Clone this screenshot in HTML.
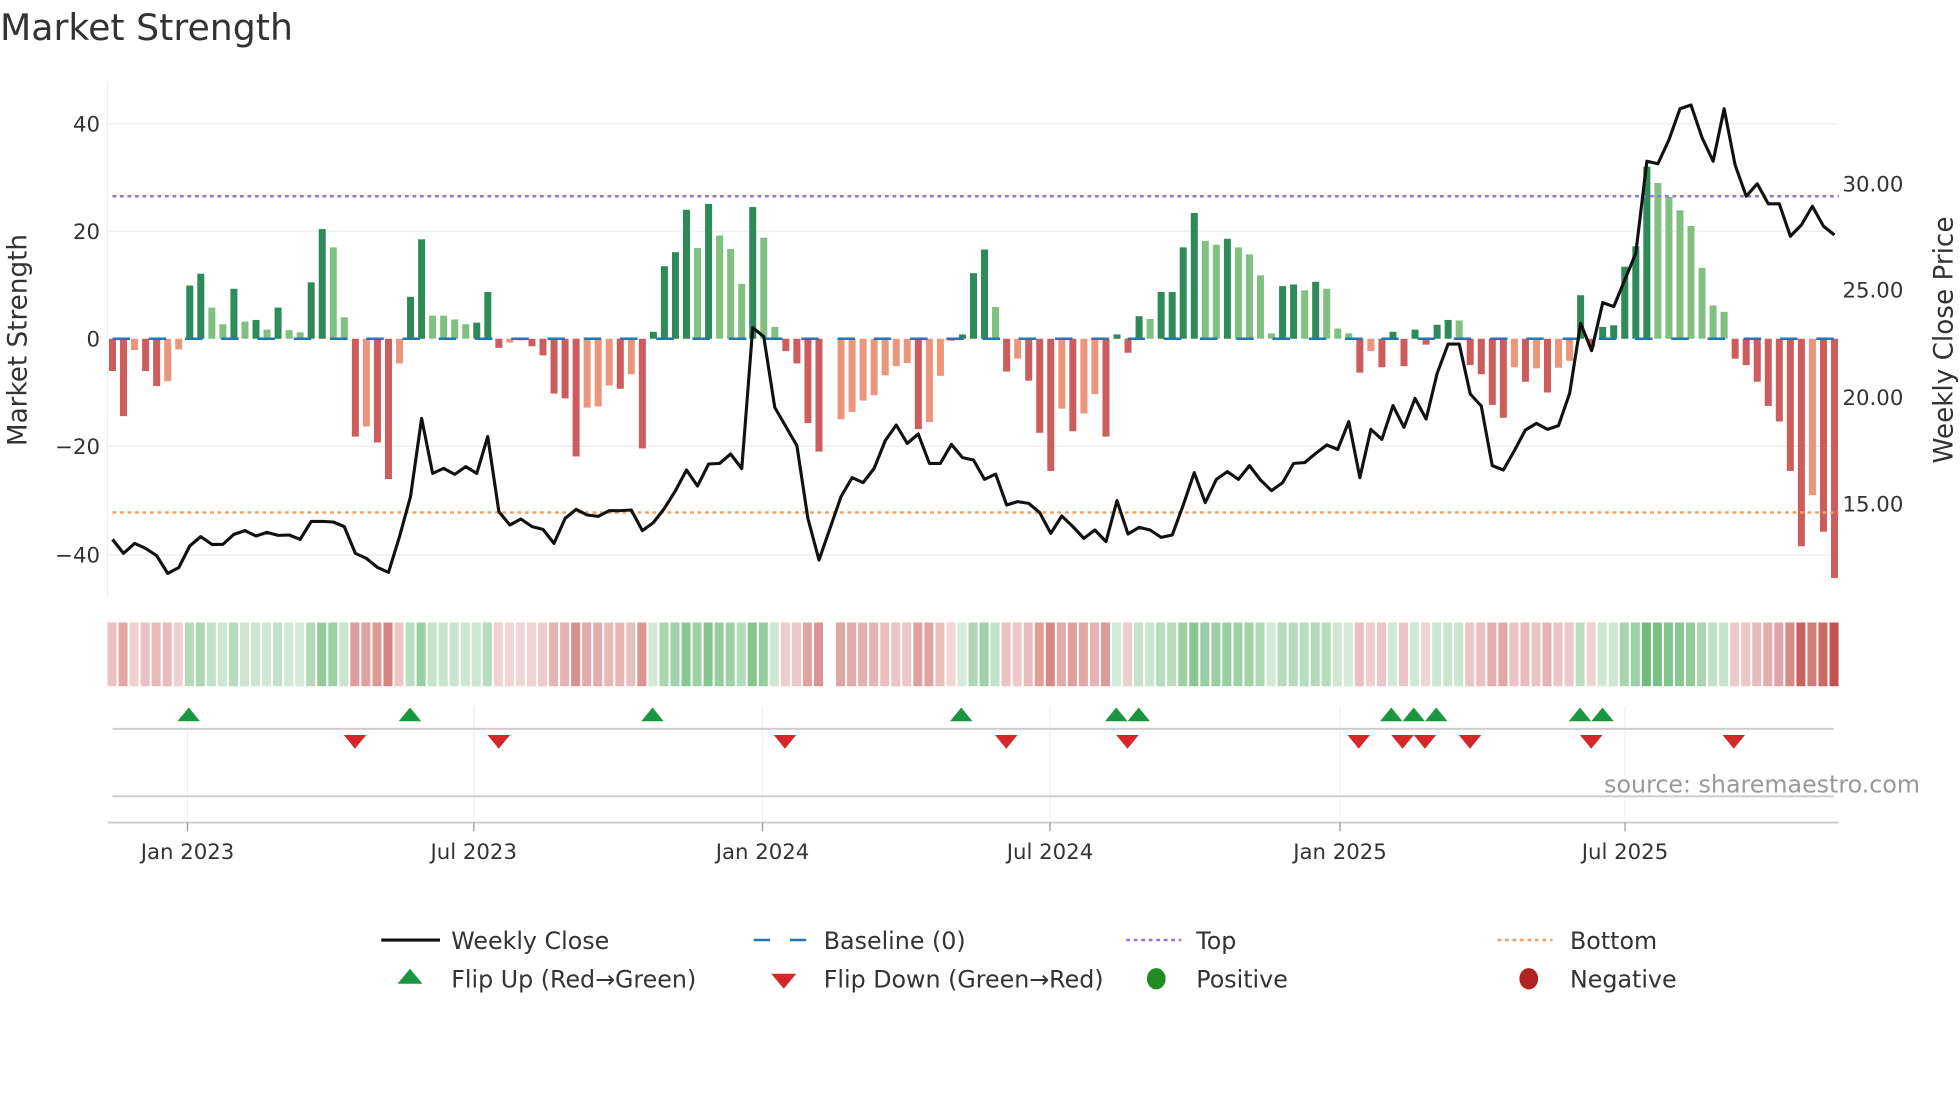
<!DOCTYPE html>
<html><head><meta charset="utf-8">
<style>
html,body{margin:0;padding:0;background:#fff;overflow:hidden}
svg{display:block}
text{font-family:"DejaVu Sans","Liberation Sans",sans-serif;fill:#333}
</style></head>
<body>
<svg id="s" xmlns="http://www.w3.org/2000/svg" width="1960" height="1102" viewBox="0 0 1568 881.6">
<rect width="1568" height="882" fill="#fff"/>
<text x="0" y="32" font-size="29" fill="#333">Market Strength</text>
<g stroke="#efefef" stroke-width="1.2">
<line x1="86" y1="99" x2="1471" y2="99"/><line x1="86" y1="185" x2="1471" y2="185"/>
<line x1="86" y1="357" x2="1471" y2="357"/><line x1="86" y1="444" x2="1471" y2="444"/>
</g>
<line x1="86" y1="65" x2="86" y2="478" stroke="#eee" stroke-width="1"/>
<g font-size="17" text-anchor="end">
<text x="80" y="105">40</text><text x="80" y="191">20</text><text x="80" y="277">0</text>
<text x="80" y="363">−20</text><text x="80" y="450">−40</text>
</g>
<g font-size="17">
<text x="1474" y="153">30.00</text><text x="1474" y="238">25.00</text>
<text x="1474" y="324">20.00</text><text x="1474" y="409">15.00</text>
</g>
<text transform="translate(21,272) rotate(-90)" font-size="21" text-anchor="middle">Market Strength</text>
<text transform="translate(1562,272) rotate(-90)" font-size="21" text-anchor="middle">Weekly Close Price</text>
<g id="bars"></g>
<line x1="90" y1="271" x2="1467" y2="271" stroke="#1f77b4" stroke-width="2" stroke-dasharray="14 15"/>
<line x1="90" y1="157" x2="1471" y2="157" stroke="#9b6fdc" stroke-width="2" stroke-dasharray="3 3"/>
<line x1="90" y1="410" x2="1471" y2="410" stroke="#f0a060" stroke-width="2" stroke-dasharray="3 3"/>
<polyline id="price" fill="none" stroke="#111" stroke-width="2.5" stroke-linejoin="round"/>
<g id="heat"></g>
<g stroke="#eef0f3" stroke-width="1">
<line x1="150" y1="565" x2="150" y2="656"/><line x1="379" y1="565" x2="379" y2="656"/>
<line x1="610" y1="565" x2="610" y2="656"/><line x1="840" y1="565" x2="840" y2="656"/>
<line x1="1072" y1="565" x2="1072" y2="656"/><line x1="1300" y1="565" x2="1300" y2="656"/>
</g>
<line x1="90" y1="583" x2="1467" y2="583" stroke="#ccc" stroke-width="1.5"/>
<line x1="90" y1="637" x2="1467" y2="637" stroke="#ccc" stroke-width="1.5"/>
<line x1="86" y1="658" x2="1471" y2="658" stroke="#ccc" stroke-width="1.5"/>
<g id="flips"></g>
<g stroke="#999" stroke-width="1">
<line x1="150" y1="658" x2="150" y2="665"/><line x1="379" y1="658" x2="379" y2="665"/>
<line x1="610" y1="658" x2="610" y2="665"/><line x1="840" y1="658" x2="840" y2="665"/>
<line x1="1072" y1="658" x2="1072" y2="665"/><line x1="1300" y1="658" x2="1300" y2="665"/>
</g>
<g font-size="17" text-anchor="middle">
<text x="150" y="687">Jan 2023</text><text x="379" y="687">Jul 2023</text>
<text x="610" y="687">Jan 2024</text><text x="840" y="687">Jul 2024</text>
<text x="1072" y="687">Jan 2025</text><text x="1300" y="687">Jul 2025</text>
</g>
<text x="1536" y="634" font-size="19" text-anchor="end" style="fill:#999">source: sharemaestro.com</text>
<g font-size="19">
<line x1="305" y1="752" x2="352" y2="752" stroke="#111" stroke-width="2.5"/>
<text x="361" y="759">Weekly Close</text>
<line x1="603" y1="752" x2="646" y2="752" stroke="#1f77b4" stroke-width="2" stroke-dasharray="13 16"/>
<text x="659" y="759">Baseline (0)</text>
<line x1="901" y1="752" x2="945" y2="752" stroke="#9b6fdc" stroke-width="2" stroke-dasharray="3 3"/>
<text x="957" y="759">Top</text>
<line x1="1198" y1="752" x2="1242" y2="752" stroke="#f0a060" stroke-width="2" stroke-dasharray="3 3"/>
<text x="1256" y="759">Bottom</text>
<polygon points="328,775 338,787 318,787" fill="#1a9641"/>
<text x="361" y="790">Flip Up (Red→Green)</text>
<polygon points="617,779 637,779 627,791" fill="#d62728"/>
<text x="659" y="790">Flip Down (Green→Red)</text>
<ellipse cx="925" cy="783" rx="7.5" ry="8.5" fill="#228b22"/>
<text x="957" y="790">Positive</text>
<ellipse cx="1223" cy="783" rx="7.5" ry="8.5" fill="#b22222"/>
<text x="1256" y="790">Negative</text>
</g>
</svg>
<script>
var D="-6r -14.4r -2.1l -6r -8.8r -7.9l -2l 9.9d 12.1d 5.8l 2.7l 9.3d 3.2l 3.5d 1.7l 5.8d 1.6l 1.2l 10.5d 20.4d 17l 4l -18.2r -16.3l -19.3r -26.1r -4.6l 7.8d 18.5d 4.3l 4.3l 3.6l 2.7l 3d 8.7d -1.7r -0.7l -0.3l -1.4r -3.1r -10.2r -11.1r -21.9r -12.8l -12.6l -8.7l -9.3r -6.6l -20.4r 1.3d "+
"13.5d 16.1d 24d 16.9l 25.1d 19.2l 16.7l 10.2l 24.5d 18.8l 2.2l -2.3r -4.6r -15.7r -21r x -15l -13.6l -11.5l -10.5l -6.8l -5.1l -4.5l -16.8r -15.5l -6.9l -0.4l 0.8d 12.2d 16.6d 5.9l -6.1r -3.7l -7.8r -17.5r -24.6r -13l -17.2r -13.9l -10.3l -18.2r 0.8d -2.6r 4.2d 3.7l 8.7d 8.7d 17d 23.4d "+
"18.2l 17.5l 18.6d 17l 15.7l 11.8l 1l 9.8d 10.1d 9l 10.6d 9.3l 1.9l 1l -6.3r -2.3l -5.3r 1.3d -5.1r 1.7d -1.1r 2.6d 3.5d 3.4l -4.9r -6.6r -12.3r -14.7r -5.3l -8r -5.5l -10r -5.4l -4.1l 8.1d -1.5r 2.2d 2.5d 13.4d 17.2d 32d 29l 26.4l 23.9l 21l 13.2l 6.2l 5l -3.7r -4.9r -8r -12.5r -15.4r -24.6r -38.6r -29.1l -35.9r -44.5r";
var T=D.split(' ');
var Z2=[1078,1120,1090,1105,1127,1180,1163,1098,1070,1093,1093,1063,1052,1068,1057,1066,1065,1078,1024,1024,1026,1040,1120,1135,1162,1177,1070,950,715,880,865,883,860,880,770,995,1035,1017,1040,1048,1090,1015,988,1005,1009,992,992,990,1052,1028,
985,932,870,918,852,850,822,866,443,470,682,740,797,1015,1140,1045,950,893,908,865,782,735,790,762,850,850,793,833,840,898,882,975,965,970,998,1060,1008,1040,1075,1050,1085,962,1062,1042,1050,1072,1065,975,878,
968,898,875,898,857,900,932,908,850,848,820,795,808,725,893,748,778,677,742,655,717,580,492,492,642,678,857,870,812,750,730,748,737,640,430,512,368,380,300,220];
var P=Z2.map(function(z){return 144+z/3.75});
P=P.concat([129,131,112,87,84,110,129,87,132,157,147,163,163,189,180,165,181,188]);
var sp=(1467.6-90)/156, bars='', heat='', pts=[];
var C={d:'#2e8b57',l:'#80c080',r:'#cd5c5c',s:'#e9967a'};
for(var i=0;i<T.length;i++){
 var x=90+i*sp, t=T[i];
 if(t!=='x'){
  var v=parseFloat(t), k=t.slice(-1);
  if(v<0&&k=='l')k='s';
  var h=v*4.3;
  bars+='<rect x="'+(x-2.8).toFixed(2)+'" y="'+(h>0?271-h:271).toFixed(2)+'" width="5.6" height="'+Math.abs(h).toFixed(2)+'" fill="'+C[k]+'"/>';
  var a=0.22+0.78*Math.pow(Math.min(Math.abs(v)/45,1),0.9);
  var c=v>=0?[75,170,90]:[195,80,75];
  var r=Math.round(255-(255-c[0])*a),g=Math.round(255-(255-c[1])*a),b=Math.round(255-(255-c[2])*a);
  heat+='<rect x="'+(x-4).toFixed(2)+'" y="498" width="'+(sp-1.6).toFixed(2)+'" height="51" fill="rgb('+r+','+g+','+b+')"/>';
 }
 if(i<P.length) pts.push(x.toFixed(1)+','+P[i].toFixed(1));
}
document.getElementById('bars').innerHTML=bars;
document.getElementById('heat').innerHTML=heat;
document.getElementById('price').setAttribute('points',pts.join(' '));
var up=[151,328,522,769,893,911,1113,1131,1149,1264,1282],dn=[284,399,628,805,902,1087,1122,1140,1176,1273,1387],f='';
up.forEach(function(x){f+='<polygon points="'+x+',566 '+(x+9)+',577 '+(x-9)+',577" fill="#1a9641"/>'});
dn.forEach(function(x){f+='<polygon points="'+(x-9)+',588 '+(x+9)+',588 '+x+',599" fill="#d62728"/>'});
document.getElementById('flips').innerHTML=f;
</script>
</body></html>
